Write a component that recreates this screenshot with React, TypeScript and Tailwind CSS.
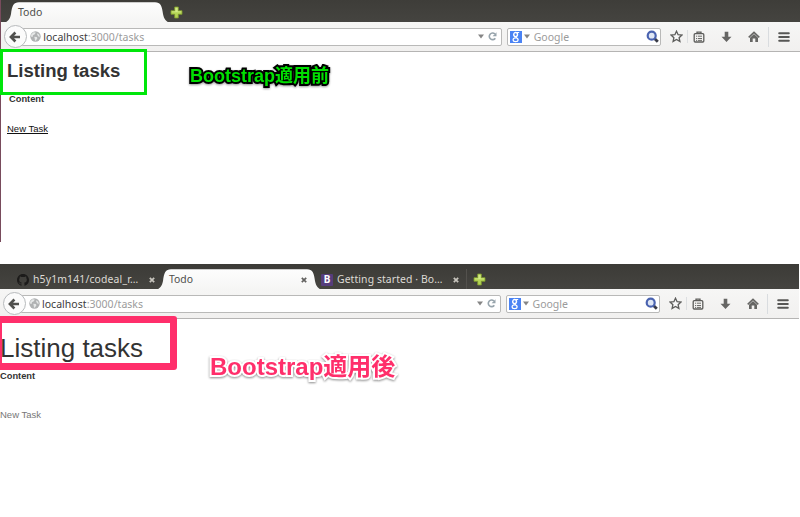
import type { ReactNode } from "react";

const UI_FONT = "font-['Noto_Sans','Open_Sans',sans-serif]";

function ActiveTab({ width, children }: { width: number; children: ReactNode }) {
  const w = width;
  return (
    <div className="relative h-full shrink-0" style={{ width }}>
      <svg className="absolute inset-0" width={w} height={21} viewBox={`0 0 ${w} 21`}>
        <defs>
          <linearGradient id="tabFill" x1="0" y1="0" x2="0" y2="1">
            <stop offset="0" stopColor="#fdfdfd" />
            <stop offset="1" stopColor="#f5f5f4" />
          </linearGradient>
        </defs>
        <path
          d={`M2 21 C7 20 9 17 10 12 C11 4 12.500 0.300 18 0.300 H${w - 18} C${w - 12.5} 0.300 ${w - 11} 4 ${w - 10} 12 C${w - 9} 17 ${w - 7} 20 ${w - 2} 21 Z`}
          fill="url(#tabFill)"
        />
      </svg>
      <div className="relative flex h-[21px] items-center pl-[16px] pr-[18px] text-[#4d4d4a]">{children}</div>
    </div>
  );
}

function CloseMark({ color }: { color: string }) {
  return (
    <svg className="ml-auto shrink-0" width="6" height="6" viewBox="0 0 6 6">
      <path d="M.8.8l4.400 4.400M5.200.8.8 5.200" stroke={color} strokeWidth="1.7" />
    </svg>
  );
}

function NewTab() {
  return (
    <svg className="shrink-0" width="13" height="13" viewBox="0 0 13 13">
      <path
        d="M4.700 1h3.600v3.700H12v3.600H8.300V12H4.700V8.300H1V4.700h3.700z"
        fill="#b4d455"
        stroke="#7d9b2d"
        strokeWidth="0.8"
      />
      <path d="M5.400 1.800h2.200v3.700h3.700v.8H1.700v-.8h3.700z" fill="#d3e987" />
    </svg>
  );
}

function GithubMark() {
  return (
    <svg className="shrink-0" width="12" height="12" viewBox="0 0 16 16" fill="#1c1b1a">
      <path d="M8 0C3.580 0 0 3.580 0 8c0 3.540 2.290 6.530 5.470 7.590.4.070.55-.17.55-.38 0-.19-.01-.82-.01-1.490-2.010.37-2.530-.49-2.690-.94-.09-.23-.48-.94-.82-1.130-.28-.15-.68-.52-.01-.53.63-.01 1.080.58 1.230.82.72 1.210 1.870.87 2.330.66.07-.52.28-.87.51-1.070-1.780-.2-3.640-.89-3.640-3.950 0-.87.31-1.590.82-2.150-.08-.2-.36-1.020.08-2.120 0 0 .67-.21 2.200.82A7.600 7.600 0 0 1 8 3.860c.68 0 1.360.09 2 .27 1.530-1.040 2.200-.82 2.200-.82.44 1.100.16 1.920.08 2.120.51.56.82 1.270.82 2.150 0 3.070-1.870 3.750-3.650 3.950.29.25.54.73.54 1.480 0 1.070-.01 1.930-.01 2.200 0 .21.15.46.55.38A8 8 0 0 0 16 8c0-4.420-3.580-8-8-8z" />
    </svg>
  );
}

function Triangle() {
  return (
    <svg className="shrink-0" width="6" height="5" viewBox="0 0 6 5">
      <path d="M0 .5h6L3 4.500z" fill="#858585" />
    </svg>
  );
}

function Toolbar({ shift }: { shift: boolean }) {
  return (
    <div
      className={`flex h-[30px] items-center border-b border-[#b5b4b3] bg-gradient-to-b from-[#f6f6f5] to-[#f1f0ef] ${shift ? "-ml-px pl-[3.500px]" : "pl-[2.700px]"}`}
    >
      <div className="z-10 flex h-[23px] w-[23px] shrink-0 items-center justify-center rounded-full border border-[#b7babc] bg-[#fbfbfb]">
        <svg width="12" height="12" viewBox="0 0 12 12" fill="none" stroke="#50504d" strokeWidth="2.6">
          <path d="M6.400 1.500 1.900 6l4.500 4.500M2 6h9" />
        </svg>
      </div>
      <div className="-ml-[5px] flex h-[18px] w-[480px] shrink-0 items-center rounded-r-[2px] border border-[#b9b9b8] bg-white pl-[7.500px] pr-[4px]">
        <svg className="shrink-0" width="11" height="11" viewBox="0 0 11 11">
          <circle cx="5.500" cy="5.500" r="5.200" fill="#b0b2b3" />
          <path
            d="M1.200 3.400 3.500 1.300 5.800 1.500 4.800 3.300 3 4.200 2.500 6 1 5.500zM4.300 5.700l2.500.4.600 1.200-1.600 2.500L5 9.500 4.700 7.500zM7.300 2.300l2 1.500.4 2.400-1.500-1-1-1.400z"
            fill="#e6e8e8"
          />
        </svg>
        <span className="ml-[2px] whitespace-pre pt-[2px] text-[10.500px] tracking-[0.030px] text-[#9b9b9b]">
          <span className="text-[#3c3c3c]">localhost</span>:3000/tasks
        </span>
        <span className="ml-auto flex items-center gap-[4px]">
          <Triangle />
          <svg width="9" height="9" viewBox="0 0 9 9">
            <path d="M7.300 6.200A3.300 3.300 0 1 1 6.900 2" fill="none" stroke="#97a4ac" strokeWidth="1.600" />
            <path d="M8.500.3v4H4.600z" fill="#97a4ac" />
          </svg>
        </span>
      </div>
      <div className="ml-[5px] flex h-[18px] w-[154px] shrink-0 items-center rounded-[2px] border border-[#b9b9b8] bg-white pl-[2px] pr-[1px]">
        <svg className="shrink-0" width="12" height="12" viewBox="0 0 12 12" fill="none" stroke="#ffffff">
          <rect width="12" height="12" fill="#4a83f4" stroke="none" />
          <ellipse cx="5.600" cy="3.600" rx="1.900" ry="2.100" strokeWidth="1.400" />
          <path d="M6.200 1.500h3M5.900 5.700c.2 1 1.900 1.200 1.900 2.700" strokeWidth="1" />
          <ellipse cx="5.600" cy="8.800" rx="2.500" ry="1.900" strokeWidth="1.200" />
        </svg>
        <span className="ml-[2.500px] flex">
          <Triangle />
        </span>
        <span className="ml-[3.500px] pt-[2px] text-[10.500px] text-[#9b9b9b]">Google</span>
        <svg className="ml-auto" width="13" height="13" viewBox="0 0 13 13">
          <path d="m8.500 8.500 3.300 3.300" stroke="#393b46" strokeWidth="2.800" />
          <circle cx="5.700" cy="5.700" r="4" fill="#dfe7f5" stroke="#4a63b0" strokeWidth="2.200" />
        </svg>
      </div>
      <svg className="ml-[9px] shrink-0" width="13" height="13" viewBox="0 0 13 13">
        <path
          d="m6.500 1.200 1.600 3.500 3.800.4-2.800 2.600.8 3.700-3.400-1.900-3.400 1.900.8-3.700L1.100 5.100l3.800-.4z"
          fill="#f8f8f8"
          stroke="#5d5d5b"
          strokeWidth="1.300"
        />
      </svg>
      <span className="ml-[4px] h-[13px] w-px bg-[#dddfe1]" />
      <svg className="ml-[5px] shrink-0" width="12" height="12" viewBox="0 0 12 12" fill="none" stroke="#5d5d5b">
        <rect x="1.200" y="2.700" width="9.600" height="8.300" rx="1" strokeWidth="1.300" />
        <path d="M4 2.400V1.200h4v1.200" strokeWidth="1.300" />
        <path d="M3 5.200h1.200m.8 0h4M3 7.500h1.200m.8 0h4M3 9.400h1.200m.8 0h4" strokeWidth="0.900" />
      </svg>
      <svg className="ml-[16px] shrink-0" width="11" height="12" viewBox="0 0 11 12">
        <path d="M3.700.8h3.600v4.900h3.200L5.500 11 .5 5.700h3.200z" fill="#666664" />
      </svg>
      <svg className="ml-[16px] shrink-0" width="12" height="12" viewBox="0 0 12 12">
        <path d="m.7 6.400 5.300-5 5.300 5" fill="none" stroke="#666664" strokeWidth="1.500" />
        <path d="M2 6.800 6 3l4 3.800V11H7.300V7.500H4.700V11H2z" fill="#666664" />
      </svg>
      <span className="ml-[8px] h-[20px] w-px bg-[#d9dcdf]" />
      <svg className="ml-[9.500px] shrink-0" width="12" height="10" viewBox="0 0 12 10">
        <path d="M1.200 1.200h9.600M1.200 5h9.600M1.200 8.800h9.600" stroke="#575755" strokeWidth="2" strokeLinecap="round" />
      </svg>
    </div>
  );
}

export default function App() {
  return (
    <div className="relative h-[517px] w-[800px] overflow-hidden bg-white font-['Liberation_Sans',Arial,sans-serif] text-[#333333]">
      <section className="h-[264px] overflow-hidden">
        <div className="h-[242px] border-l border-[#784b5c]">
          <div className={UI_FONT}>
            <div className="flex h-[23px] items-start bg-gradient-to-b from-[#3e3d39] to-[#454440] pt-[2px] text-[10.500px]">
              <div className="h-[21px]">
                <ActiveTab width={172}>
                  <span className="ml-px pt-px">Todo</span>
                </ActiveTab>
              </div>
              <span className="mt-[4px] -ml-[3px]">
                <NewTab />
              </span>
            </div>
            <div className="-mt-px">
              <Toolbar shift={false} />
            </div>
          </div>
          <div className="pl-[6px]">
            <h1 className="pt-[8px] text-[18.560px] leading-[22px] font-bold">Listing tasks</h1>
            <p className="mt-[11px] pl-[2px] text-[9.300px] leading-[12px] font-bold">Content</p>
            <a className="mt-[17px] block w-fit text-[9.500px] leading-[14px] text-[#111111] underline">New Task</a>
          </div>
        </div>
      </section>

      <section className="w-[799px]">
        <div className={UI_FONT}>
          <div className="flex h-[25px] bg-gradient-to-b from-[#3c3b37] to-[#454440] pt-[5px] text-[10.400px]">
            <div className="flex h-[21px] w-[155px] shrink-0 items-center pl-[17px] text-[#dedbd5]">
              <GithubMark />
              <span className="ml-[4px] whitespace-nowrap tracking-[0.16px]">h5y1m141/codeal_r…</span>
              <CloseMark color="#c8c5be" />
            </div>
            <div className="-ml-[2px] h-[20px]">
              <ActiveTab width={172}>
                <span>Todo</span>
                <CloseMark color="#62615f" />
              </ActiveTab>
            </div>
            <div className="-ml-[4px] flex h-[21px] w-[138px] shrink-0 items-center text-[#dedbd5]">
              <span className="flex h-[12px] w-[12px] shrink-0 items-center justify-center rounded-[1px] bg-[#563d7c] text-[10px] font-bold text-white">
                B
              </span>
              <span className="ml-[4px] whitespace-nowrap tracking-[0.1px]">Getting started · Bo…</span>
              <CloseMark color="#c8c5be" />
            </div>
            <span className="ml-[7px] h-[20px] w-px bg-[#53514d]" />
            <span className="mt-[4px] ml-[6px]">
              <NewTab />
            </span>
          </div>
          <Toolbar shift={true} />
        </div>
        <h1 className="pt-[13px] text-[26px] leading-[32px]">Listing tasks</h1>
        <p className="mt-[6px] text-[9.300px] leading-[12px] font-bold">Content</p>
        <a className="mt-[26px] block text-[9.500px] leading-[14px] text-[#777777]">New Task</a>
      </section>

      <div className="absolute top-[48.500px] left-0 h-[46px] w-[147px] border-3 border-[#00e60a]" />
      <div className="absolute top-[63px] left-[190px] whitespace-nowrap font-['Liberation_Sans','Noto_Sans_CJK_JP',sans-serif] text-[18px] leading-[26px] font-bold text-[#00e000] [-webkit-text-stroke:4px_#000000] [paint-order:stroke_fill] drop-shadow-[0_1px_1px_rgba(0,0,0,0.4)]">
        Bootstrap適用前
      </div>
      <div className="absolute top-[316px] -left-[5px] h-[54px] w-[182px] rounded-[3px] border-7 border-[#ff2f6b]" />
      <div className="absolute top-[350px] left-[210px] whitespace-nowrap font-['Liberation_Sans','Noto_Sans_CJK_JP',sans-serif] text-[24px] leading-[34px] font-bold text-[#ff2f6b] [-webkit-text-stroke:4px_#ffffff] [paint-order:stroke_fill] drop-shadow-[0_1px_1px_rgba(0,0,0,0.45)]">
        Bootstrap適用後
      </div>
    </div>
  );
}
